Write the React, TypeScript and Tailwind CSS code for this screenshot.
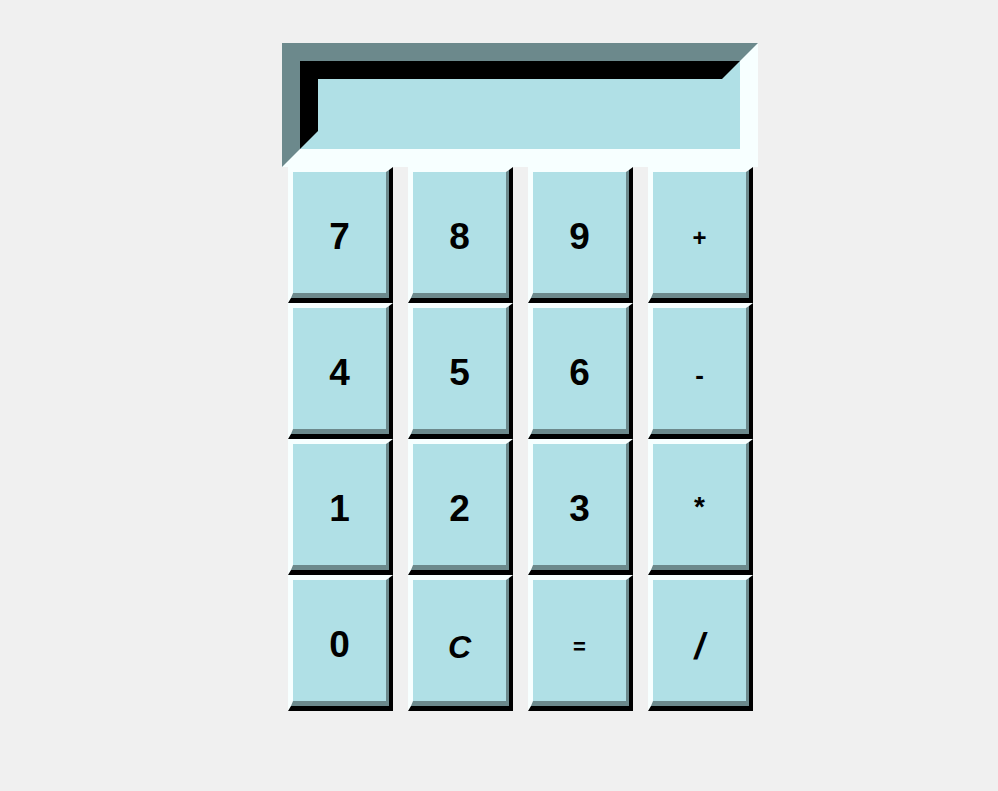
const keys = ["7", "8", "9", "+", "4", "5", "6", "-", "1", "2", "3", "*", "0", "C", "=", "/"]

const small: Record<string, string> = {
  "+": "text-[24px] pt-[10px]",
  "-": "text-[26px] pt-[14px]",
  "*": "text-[28px] pt-[4px]",
  "=": "text-[22px] pt-[12px]",
  "/": "text-[36px] pt-[12px] italic",
  C: "text-[32px] pt-[12px] italic",
}

function Key({ label }: { label: string }) {
  const size = small[label] ?? "text-[37px] pt-[9px]"
  return (
    <button
      type="button"
      className="h-[136px] w-[105px] border-t-[3px] border-l-[3px] border-r-4 border-b-[5px] border-t-[#f7ffff] border-l-[#f7ffff] border-r-black border-b-black p-0"
    >
      <div
        className={`flex h-full w-full items-center justify-center border-t-2 border-l-2 border-r-[3px] border-b-[5px] border-t-[#f7ffff] border-l-[#f7ffff] border-r-[#6c898c] border-b-[#6c898c] bg-[#b0e0e6] font-bold text-black [font-family:'Comic_Sans_MS','Liberation_Sans',sans-serif] ${size}`}
      >
        {label}
      </div>
    </button>
  )
}

export default function App() {
  return (
    <main className="min-h-screen bg-[#f0f0f0] pl-[282px] pt-[43px]">
      <div className="w-[476px]">
        <div className="border-[18px] border-t-[#6c898c] border-l-[#6c898c] border-r-[#f7ffff] border-b-[#f7ffff]">
          <div className="box-content h-[52px] border-[18px] border-t-black border-l-black border-r-[#b0e0e6] border-b-[#b0e0e6] bg-[#b0e0e6]" />
        </div>
        <div className="grid grid-cols-[repeat(4,105px)] gap-x-[15px] pl-[6px]">
          {keys.map((k) => (
            <Key key={k} label={k} />
          ))}
        </div>
      </div>
    </main>
  )
}
